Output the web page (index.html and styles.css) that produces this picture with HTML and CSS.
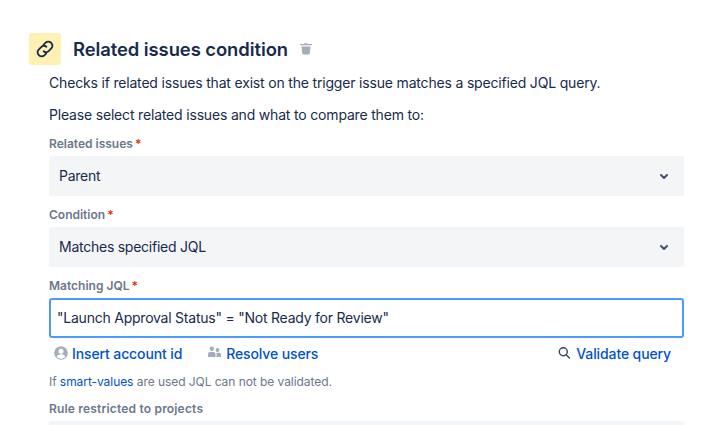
FILE: index.html
```html
<!DOCTYPE html>
<html lang="en">
<head>
<meta charset="utf-8">
<title>Related issues condition</title>
<link rel="stylesheet" href="styles.css">
</head>
<body>
<main class="page">
  <header class="head">
    <span class="tile">
      <svg width="22" height="22" viewBox="0 0 24 24" fill="none" stroke="#172B4D" stroke-width="2" stroke-linecap="round"><path d="M10.6 7.2l2.1-2.1a4.1 4.1 0 0 1 5.8 0l.4.4a4.1 4.1 0 0 1 0 5.8l-3 3a4.1 4.1 0 0 1-5.4.2"/><path d="M13.4 16.8l-2.1 2.1a4.1 4.1 0 0 1-5.800 0l-.4-.4a4.1 4.1 0 0 1 0-5.8l3-3a4.1 4.1 0 0 1 5.4-.2"/></svg>
    </span>
    <h1 class="title">Related issues condition</h1>
    <svg class="trash" width="16" height="16" viewBox="0 0 16 16"><path fill="#A5ADBA" d="M2 3h3.900l.5-.7h3.200l.5.7H14v1.300H2z"/><path fill="#A5ADBA" d="M3.400 5.400h9.200l-.9 7.200a1 1 0 0 1-1 .9H5.300a1 1 0 0 1-1-.9z"/></svg>
  </header>
  <div class="body">
    <p class="text first">Checks if related issues that exist on the trigger issue matches a specified JQL query.</p>
    <p class="text second">Please select related issues and what to compare them to:</p>

    <label class="label">Related issues<span class="req">*</span></label>
    <div class="select">
      <span class="value">Parent</span>
      <svg width="24" height="24" viewBox="0 0 24 24" fill="none" stroke="#42526E" stroke-width="2" stroke-linecap="round" stroke-linejoin="round"><path d="M9 11l3 3 3-3"/></svg>
    </div>

    <label class="label">Condition<span class="req">*</span></label>
    <div class="select">
      <span class="value">Matches specified JQL</span>
      <svg width="24" height="24" viewBox="0 0 24 24" fill="none" stroke="#42526E" stroke-width="2" stroke-linecap="round" stroke-linejoin="round"><path d="M9 11l3 3 3-3"/></svg>
    </div>

    <label class="label">Matching JQL<span class="req">*</span></label>
    <div class="input">"Launch Approval Status" = "Not Ready for Review"</div>

    <div class="actions">
      <a class="action">
        <svg width="16" height="16" viewBox="0 0 16 16"><circle cx="8" cy="8" r="6.800" fill="#A5ADBA"/><circle cx="8" cy="6.200" r="2.500" fill="#fff"/><path fill="#fff" d="M3.700 12c.5-1.900 1.800-2.800 4.300-2.800s3.800.9 4.300 2.800A5.700 5.700 0 0 1 8 13.800 5.700 5.700 0 0 1 3.700 12z"/></svg>
        Insert account id
      </a>
      <a class="action users">
        <svg width="16" height="16" viewBox="0 0 16 16" fill="#A5ADBA"><circle cx="4.800" cy="3.800" r="2.200"/><circle cx="10.500" cy="5" r="1.900"/><path d="M1 12V9a2 2 0 0 1 2-2h3.500a2 2 0 0 1 2 2v3z"/><path d="M9.500 12V9c0-.5-.1-1-.3-1.300h3a1.800 1.800 0 0 1 1.800 1.800V12z"/></svg>
        Resolve users
      </a>
      <a class="action validate">
        <svg width="16" height="16" viewBox="0 0 16 16" fill="none" stroke="#344563" stroke-width="1.400" stroke-linecap="round"><circle cx="6.300" cy="6.800" r="4"/><path d="M9.400 10l3 3"/></svg>
        Validate query
      </a>
    </div>

    <p class="help">If <a class="link">smart-values</a> are used JQL can not be validated.</p>

    <label class="label wide">Rule restricted to projects</label>
    <div class="select"></div>
  </div>
</main>
</body>
</html>
```
FILE: styles.css
```css
* { box-sizing: border-box; }
html, body { margin: 0; height: 100%; overflow: hidden; background: #fff; }
body { font-family: Inter, "Liberation Sans", sans-serif; color: #172B4D; font-size: 14px; }
.page { padding: 33px 32px 0 29px; }
.head { display: flex; align-items: center; height: 32px; }
.tile { width: 32px; height: 32px; border-radius: 3px; background: #FFF0B3; display: flex; align-items: center; justify-content: center; flex: none; }
.title { margin: 0 0 0 12px; padding-top: 1px; font-size: 18.4px; font-weight: 600; letter-spacing: -0.06px; line-height: 31px; }
.trash { margin-left: 10px; }
.body { padding-left: 20px; }
.text { margin: 0; font-size: 14px; line-height: 20px; letter-spacing: -0.18px; }
.first { margin-top: 8px; }
.second { margin-top: 12px; }
.label { display: block; margin-top: 11px; font-size: 12px; font-weight: 600; line-height: 16px; color: #6B778C; }
.wide { letter-spacing: 0.18px; }
.req { color: #DE350B; margin-left: 2px; }
.select { margin-top: 4px; height: 40px; border-radius: 3px; background: #F4F5F7; display: flex; align-items: center; justify-content: space-between; padding: 0 8px 0 10px; }
.value { padding-bottom: 2px; letter-spacing: -0.25px; }
.input { margin-top: 4px; height: 40px; border: 2px solid #4C9AFF; border-radius: 3px; background: #fff; padding: 0 6px 2px; display: flex; align-items: center; letter-spacing: -0.23px; }
.actions { display: flex; align-items: center; height: 20px; margin-top: 5px; padding: 0 13px 0 4px; }
.action { display: inline-flex; align-items: center; gap: 3px; font-weight: 500; color: #0052CC; letter-spacing: -0.12px; }
.users { margin-left: 25px; }
.validate { margin-left: auto; }
.help { margin: 11px 0 0; font-size: 12px; line-height: 16px; color: #6B778C; letter-spacing: -0.06px; }
.link { color: #0052CC; }
.help + .label { margin-top: 11px; }
```
